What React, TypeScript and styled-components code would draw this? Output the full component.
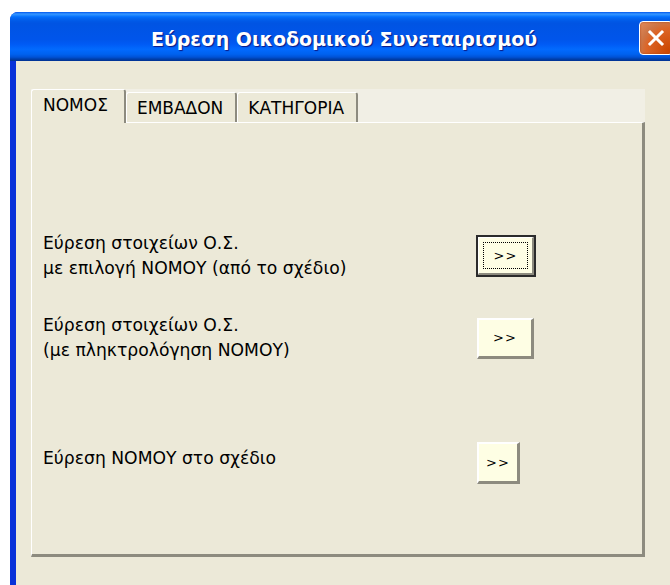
import styled, { createGlobalStyle } from 'styled-components';

const GlobalStyle = createGlobalStyle`
  html, body {
    margin: 0;
    padding: 0;
    background: #ffffff;
    overflow: hidden;
  }
`;

const rows = [
  {
    lines: ['Εύρεση στοιχείων Ο.Σ.', 'με επιλογή ΝΟΜΟΥ (από το σχέδιο)'],
    offset: 0,
    width: 58,
    height: 40,
    focused: true,
  },
  {
    lines: ['Εύρεση στοιχείων Ο.Σ.', '(με πληκτρολόγηση ΝΟΜΟΥ)'],
    offset: 32,
    width: 57,
    height: 41,
    focused: false,
  },
  {
    lines: ['Εύρεση ΝΟΜΟΥ στο σχέδιο'],
    offset: 79,
    width: 43,
    height: 42,
    focused: false,
  },
];

const tabs = ['ΝΟΜΟΣ', 'ΕΜΒΑΔΟΝ', 'ΚΑΤΗΓΟΡΙΑ'];

const App = () => {
  return (
    <>
      <GlobalStyle />
      <Window>
        <TitleBar>
          <Title>Εύρεση Οικοδομικού Συνεταιρισμού</Title>
          <CloseButton aria-label="Κλείσιμο">
            <svg width="18" height="18" viewBox="0 0 18 18">
              <path
                d="M3 3 L15 15 M15 3 L3 15"
                stroke="#ffffff"
                strokeWidth="3"
                strokeLinecap="square"
              />
            </svg>
          </CloseButton>
        </TitleBar>
        <Client>
          <TabControl>
            <TabStrip>
              {tabs.map((tab, idx) => (
                <Tab key={tab} $active={idx === 0}>
                  {tab}
                </Tab>
              ))}
            </TabStrip>
            <Panel>
              {rows.map((row, idx) => (
                <Row key={idx} $offset={row.offset} $single={row.lines.length === 1}>
                  <Label>
                    {row.lines.map((line) => (
                      <div key={line}>{line}</div>
                    ))}
                  </Label>
                  <GoButton $w={row.width} $h={row.height} $focused={row.focused}>
                    <FocusRing $focused={row.focused}>&gt;&gt;</FocusRing>
                  </GoButton>
                </Row>
              ))}
            </Panel>
          </TabControl>
        </Client>
      </Window>
    </>
  );
};

export default App;

const Window = styled.div`
  margin: 12px 0 0 10px;
  width: 668px;
  height: 600px;
  display: flex;
  flex-direction: column;
  border-radius: 8px 8px 0 0;
  overflow: hidden;
  background: #0831d9;
`;

const TitleBar = styled.div`
  position: relative;
  height: 49px;
  display: flex;
  align-items: center;
  justify-content: center;
  background: linear-gradient(
    180deg,
    #0058ee 0%,
    #3593ff 4%,
    #288eff 6%,
    #127dff 8%,
    #036ffc 10%,
    #0262ee 14%,
    #0057e5 20%,
    #0054e3 24%,
    #0055eb 56%,
    #005bf5 66%,
    #026afe 76%,
    #0062ef 86%,
    #0052d6 92%,
    #0040ab 96%,
    #003092 100%
  );
`;

const Title = styled.span`
  font-family: 'DejaVu Sans', 'Liberation Sans', sans-serif;
  font-weight: bold;
  font-size: 19px;
  color: #ffffff;
  padding-top: 4px;
  text-shadow: 1px 1px 1px #0a1883;
`;

const CloseButton = styled.div`
  position: absolute;
  right: 5px;
  top: 9px;
  width: 32px;
  height: 32px;
  display: flex;
  align-items: center;
  justify-content: center;
  border: 1px solid #ffffff;
  border-radius: 4px;
  background: radial-gradient(
    circle at 90% 90%,
    #cc4600 0%,
    #dc6527 55%,
    #cd7546 70%,
    #e28b5b 100%
  );
  box-shadow: inset 0 0 2px #a23b11;
`;

const Client = styled.div`
  flex: 1;
  margin-left: 6px;
  background: #ece9d8;
  padding: 28px 0 0 15px;
`;

const TabControl = styled.div`
  width: 614px;
  display: flex;
  flex-direction: column;
`;

const TabStrip = styled.div`
  display: flex;
  align-items: flex-end;
  height: 33px;
  background: #f1efe5;
`;

const Tab = styled.div<{ $active: boolean }>`
  box-sizing: border-box;
  height: ${({ $active }) => ($active ? '34px' : '30px')};
  margin-bottom: ${({ $active }) => ($active ? '-1px' : '0')};
  padding: ${({ $active }) => ($active ? '0 16px 4px 11px' : '0 12px 0 10px')};
  display: flex;
  align-items: center;
  font-family: 'DejaVu Sans', 'Liberation Sans', sans-serif;
  font-size: 17px;
  color: #000000;
  background: #ece9d8;
  border-top: 1px solid #ffffff;
  border-left: 1px solid #ffffff;
  border-right: 2px solid #8d8b7f;
  border-radius: 3px 3px 0 0;
  position: relative;
  z-index: ${({ $active }) => ($active ? 1 : 0)};
`;

const Panel = styled.div`
  box-sizing: border-box;
  height: 435px;
  display: flex;
  flex-direction: column;
  padding: 108px 0 0 11px;
  background: #ece9d8;
  border-top: 1px solid #ffffff;
  border-left: 1px solid #ffffff;
  border-right: 3px solid #8d8b7f;
  border-bottom: 3px solid #8d8b7f;
`;

const Row = styled.div<{ $offset: number; $single: boolean }>`
  display: grid;
  grid-template-columns: 434px auto;
  align-items: center;
  margin-top: ${({ $offset }) => $offset}px;

  & > :first-child {
    margin-top: ${({ $single }) => ($single ? '-10px' : '0')};
  }
`;

const Label = styled.div`
  font-family: 'DejaVu Sans', 'Liberation Sans', sans-serif;
  font-size: 17.2px;
  line-height: 25px;
  color: #000000;
`;

const GoButton = styled.div<{ $w: number; $h: number; $focused: boolean }>`
  box-sizing: border-box;
  width: ${({ $w }) => $w}px;
  height: ${({ $h }) => $h}px;
  display: flex;
  align-items: stretch;
  justify-content: stretch;
  padding: 4px;
  background: #fefee4;
  border-style: solid;
  border-width: 2px 3px 3px 2px;
  border-color: #ffffff #8d8b7f #8d8b7f #ffffff;
  outline: ${({ $focused }) => ($focused ? '2px solid #2b2b2b' : 'none')};
  outline-offset: ${({ $focused }) => ($focused ? '-1px' : '0')};
`;

const FocusRing = styled.div<{ $focused: boolean }>`
  flex: 1;
  display: flex;
  align-items: center;
  justify-content: center;
  font-family: 'DejaVu Sans', 'Liberation Sans', sans-serif;
  font-size: 13px;
  letter-spacing: 1px;
  color: #000000;
  border: 1px dotted ${({ $focused }) => ($focused ? '#000000' : 'transparent')};
`;
